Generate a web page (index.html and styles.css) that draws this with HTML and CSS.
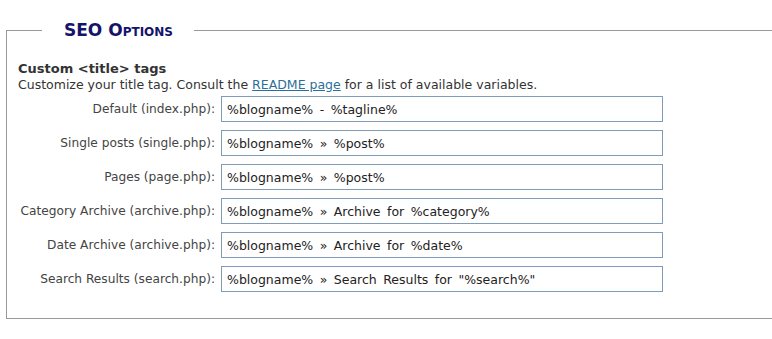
FILE: index.html
```html
<!DOCTYPE html>
<html lang="en">
<head>
  <meta charset="UTF-8">
  <title>SEO Options</title>
  <link rel="stylesheet" href="styles.css">
</head>
<body>

  <fieldset class="options">
    <legend>SEO Options</legend>

    <h3>Custom &lt;title&gt; tags</h3>
    <p class="desc">Customize your title tag. Consult the <a href="#">README page</a> for a list of available variables.</p>

    <div class="rows">
      <label for="t-default">Default (index.php):</label>
      <input type="text" id="t-default" value="%blogname% - %tagline%">

      <label for="t-single">Single posts (single.php):</label>
      <input type="text" id="t-single" value="%blogname% &raquo; %post%">

      <label for="t-page">Pages (page.php):</label>
      <input type="text" id="t-page" value="%blogname% &raquo; %post%">

      <label for="t-cat">Category Archive (archive.php):</label>
      <input type="text" id="t-cat" value="%blogname% &raquo; Archive for %category%">

      <label for="t-date">Date Archive (archive.php):</label>
      <input type="text" id="t-date" value="%blogname% &raquo; Archive for %date%">

      <label for="t-search">Search Results (search.php):</label>
      <input type="text" id="t-search" value="%blogname% &raquo; Search Results for &quot;%search%&quot;">
    </div>
  </fieldset>

</body>
</html>
```

FILE: styles.css
```css
body {
  margin: 0;
  padding: 20px 0 0 6px;
  font-family: "DejaVu Sans", Verdana, sans-serif;
  font-size: 12px;
  color: #333;
  background: #fff;
  overflow: hidden;
}
.options {
  width: 800px;
  margin: 0;
  padding: 11px 10px 26px 11px;
  border: 1px solid #999;
}
legend {
  margin-left: 24px;
  padding: 0 21px 0 22px;
  font-size: 17px;
  font-weight: bold;
  font-variant: small-caps;
  color: #14146b;
}
h3 {
  margin: 10px 0 0;
  font-size: 13px;
  line-height: 16px;
  font-weight: bold;
  color: #333;
}
.desc {
  margin: 0 0 3px;
  font-size: 12.5px;
  line-height: 16px;
}
.desc a {
  color: #2a6f9b;
}
.rows {
  display: grid;
  grid-template-columns: 197px 442px;
  column-gap: 6px;
  row-gap: 8px;
  align-items: center;
}
.rows label {
  text-align: right;
  font-size: 12.2px;
  color: #444;
}
.rows input {
  box-sizing: border-box;
  height: 26px;
  margin: 0;
  padding: 2px 5px;
  border: 1px solid #7f9db9;
  font-family: inherit;
  font-size: 12.5px;
  word-spacing: 2.5px;
  color: #222;
}
```
